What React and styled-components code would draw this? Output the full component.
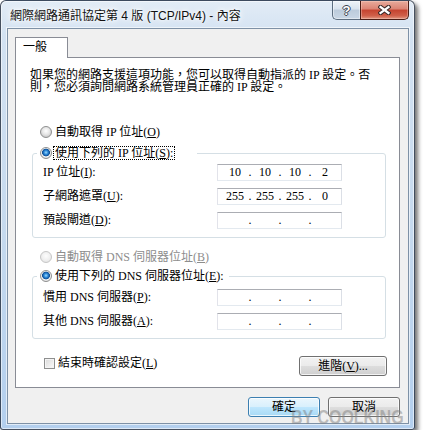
import React from "react";
import styled, { createGlobalStyle } from "styled-components";

const GlobalStyle = createGlobalStyle`
  html, body {
    margin: 0;
    padding: 0;
    background: #ffffff;
  }
  body {
    font-family: "Liberation Serif", "Noto Sans CJK TC", serif;
    font-size: 12px;
    color: #000;
  }
`;

const Window = styled.div`
  position: relative;
  box-sizing: border-box;
  width: 415px;
  height: 430px;
  padding: 0 5px 5px 6px;
  border: 1px solid rgba(20, 30, 45, 0.75);
  border-radius: 6px 6px 3px 3px;
  background: linear-gradient(180deg, #e2ecf6 0%, #d3e2f2 8%, #c5d9ee 55%, #b3cfee 100%);
  box-shadow: inset 0 0 0 1px rgba(255, 255, 255, 0.55), 3px 3px 4px rgba(0, 0, 0, 0.55);
  display: flex;
  flex-direction: column;
`;

const TitleBar = styled.div`
  height: 27px;
  display: flex;
  align-items: flex-start;
  justify-content: space-between;
`;

const Title = styled.div`
  margin: 8px 0 0 3px;
  font-family: "Liberation Sans", "Noto Sans CJK TC", sans-serif;
  font-size: 12px;
  line-height: 14px;
  color: #111;
  text-shadow: 0 0 6px #fff, 0 0 3px #fff, 0 0 10px rgba(255, 255, 255, 0.9);
`;

const CaptionButtons = styled.div`
  display: flex;
`;

const HelpButton = styled.div`
  box-sizing: border-box;
  width: 28px;
  height: 19px;
  border: 1px solid #5d6e80;
  border-top: none;
  border-right: none;
  border-radius: 0 0 0 5px;
  background: linear-gradient(180deg, #eef3f8 0%, #d9e3ee 45%, #bccbdb 50%, #c9d7e5 100%);
  box-shadow: inset 0 0 0 1px rgba(255, 255, 255, 0.45);
  display: flex;
  align-items: center;
  justify-content: center;
  font-family: "Liberation Sans", sans-serif;
  font-weight: bold;
  font-size: 13px;
  color: #fff;
  text-shadow: 1px 0 0 #3b4450, -1px 0 0 #3b4450, 0 1px 0 #3b4450, 0 -1px 0 #3b4450;
`;

const CloseButton = styled.div`
  box-sizing: border-box;
  width: 49px;
  height: 19px;
  border: 1px solid #4b1d15;
  border-top: none;
  border-radius: 0 0 5px 0;
  background: linear-gradient(180deg, #e8ab9c 0%, #db8373 45%, #c5432f 50%, #d0604a 82%, #e29a84 100%);
  box-shadow: inset 0 0 0 1px rgba(255, 220, 210, 0.35);
  display: flex;
  align-items: center;
  justify-content: center;
`;

const Client = styled.div`
  box-sizing: border-box;
  height: 396px;
  border: 1px solid #7e91a6;
  box-shadow: 0 0 0 1px rgba(255, 255, 255, 0.6);
  background: #f0f0f0;
  padding: 8px 8px 6px 7px;
  display: flex;
  flex-direction: column;
`;

const TabStrip = styled.div`
  display: flex;
  height: 20px;
`;

const Tab = styled.div`
  position: relative;
  z-index: 1;
  box-sizing: border-box;
  width: 53px;
  height: 21px;
  padding-left: 7px;
  border: 1px solid #898c95;
  border-bottom: none;
  background: #fff;
  line-height: 19px;
`;

const Panel = styled.div`
  box-sizing: border-box;
  height: 331px;
  border: 1px solid #898c95;
  background: #fff;
  display: flex;
  flex-direction: column;
`;

const Description = styled.p`
  margin: 11px 0 0 14px;
  line-height: 12px;
`;

const RadioRow = styled.div`
  display: flex;
  align-items: center;
  height: 16px;
  margin: ${(p) => p.$mt}px 0 0 24px;
  color: ${(p) => (p.$disabled ? "#8d8d8d" : "#000")};
`;

const RadioDot = styled.span`
  box-sizing: border-box;
  flex: none;
  width: 12px;
  height: 12px;
  border-radius: 50%;
  border: 1px solid ${(p) => (p.$disabled ? "#c6c6c6" : "#8e8f8f")};
  background: ${(p) =>
    p.$checked
      ? "radial-gradient(circle at 50% 45%, #9adbfb 0, #2a86d8 2px, #0c4c92 3.6px, #f6f6f6 4.2px, #d8d8d8 6px)"
      : p.$disabled
      ? "radial-gradient(circle at 50% 40%, #fdfdfd 0, #f0f0f0 4px, #e6e6e6 6px)"
      : "radial-gradient(circle at 50% 40%, #ffffff 0, #e6e6e6 3.5px, #cbcbcb 6px)"};
`;

const RadioText = styled.span`
  margin-left: 1px;
  padding: 0 1px;
  line-height: 12px;
  border: 1px dotted ${(p) => (p.$focused ? "#000" : "transparent")};
`;

const Group = styled.fieldset`
  margin: ${(p) => p.$mt}px 13px 0 16px;
  padding: ${(p) => p.$pt}px 0 8px 4px;
  min-inline-size: 0;
  border: 1px solid #d5dfe5;
  border-radius: 3px;
`;

const Legend = styled.legend`
  padding: 0;
  width: ${(p) => p.$w}px;
  height: 16px;
`;

const LegendInner = styled.div`
  display: flex;
  align-items: center;
  height: 16px;
  padding-left: 3px;
`;

const FieldGrid = styled.div`
  display: grid;
  grid-template-columns: 174px 125px;
  row-gap: 7px;
  align-items: center;
  margin-left: 6px;
`;

const FieldLabel = styled.span`
  line-height: 17px;
`;

const IpBox = styled.div`
  box-sizing: border-box;
  width: 125px;
  height: 17px;
  display: flex;
  align-items: center;
  padding-left: 5px;
  border: 1px solid;
  border-color: #abadb3 #dbdfe6 #e3e9ef #e2e3ea;
  background: #fff;
  line-height: 15px;
`;

const Octet = styled.span`
  width: 24px;
  text-align: center;
`;

const Dot = styled.span`
  width: 6px;
  text-align: center;
`;

const BottomRow = styled.div`
  display: flex;
  justify-content: space-between;
  align-items: flex-start;
  margin: 17px 12px 0 28px;
`;

const CheckLabel = styled.label`
  display: flex;
  align-items: center;
  height: 14px;
  line-height: 14px;
`;

const CheckBox = styled.span`
  box-sizing: border-box;
  width: 11px;
  height: 11px;
  margin-right: 3px;
  border: 1px solid #8e8f8f;
  background: linear-gradient(135deg, #d9d9d9 0%, #eeeeee 60%, #fbfbfb 100%);
  box-shadow: inset 0 0 0 1px #f4f4f4;
`;

const Button = styled.button`
  box-sizing: border-box;
  width: ${(p) => p.$w}px;
  height: 20px;
  padding: 0;
  border: 1px solid ${(p) => (p.$primary ? "#3c7fb1" : "#707070")};
  border-radius: 3px;
  background: ${(p) =>
    p.$primary
      ? "linear-gradient(180deg, #eaf6fd 0%, #d9f0fc 48%, #bee6fd 52%, #a7d9f5 100%)"
      : "linear-gradient(180deg, #f2f2f2 0%, #ebebeb 48%, #dddddd 52%, #cfcfcf 100%)"};
  box-shadow: inset 0 0 0 1px rgba(255, 255, 255, 0.75);
  font-family: "Liberation Serif", "Noto Sans CJK TC", serif;
  font-size: 12px;
  line-height: 18px;
  color: #000;
`;

const Footer = styled.div`
  display: flex;
  justify-content: flex-end;
  gap: 8px;
  margin-top: 9px;
`;

const Watermark = styled.div`
  position: absolute;
  left: 290px;
  top: 406px;
  white-space: nowrap;
  font-family: "Liberation Sans", sans-serif;
  font-weight: bold;
  font-size: 20px;
  line-height: 20px;
  color: rgba(130, 130, 130, 0.5);
  transform: scaleX(0.8);
  transform-origin: left center;
  pointer-events: none;
`;

const CloseIcon = () => (
  <svg width="13" height="10" viewBox="0 0 13 10">
    <path d="M2.5 2 L10.5 8 M10.5 2 L2.5 8" stroke="#3a2a28" strokeWidth="4.4" strokeLinecap="square" fill="none" />
    <path d="M2.5 2 L10.5 8 M10.5 2 L2.5 8" stroke="#ffffff" strokeWidth="2.2" strokeLinecap="square" fill="none" />
  </svg>
);

const Radio = ({ checked, disabled, focused, children, mt }) => (
  <RadioRow $mt={mt} $disabled={disabled}>
    <RadioDot $checked={checked} $disabled={disabled} />
    <RadioText $focused={focused}>{children}</RadioText>
  </RadioRow>
);

const LegendRadio = ({ w, focused, children }) => (
  <Legend $w={w}>
    <LegendInner>
      <RadioDot $checked />
      <RadioText $focused={focused}>{children}</RadioText>
    </LegendInner>
  </Legend>
);

const IpField = ({ value }) => {
  const parts = value ? value.split(".") : ["", "", "", ""];
  return (
    <IpBox>
      {parts.map((p, i) => (
        <React.Fragment key={i}>
          <Octet>{p}</Octet>
          {i < 3 && <Dot>.</Dot>}
        </React.Fragment>
      ))}
    </IpBox>
  );
};

export default function App() {
  return (
    <>
      <GlobalStyle />
      <Window>
        <TitleBar>
          <Title>網際網路通訊協定第 4 版 (TCP/IPv4) - 內容</Title>
          <CaptionButtons>
            <HelpButton>?</HelpButton>
            <CloseButton>
              <CloseIcon />
            </CloseButton>
          </CaptionButtons>
        </TitleBar>
        <Client>
          <TabStrip>
            <Tab>一般</Tab>
          </TabStrip>
          <Panel>
            <Description>
              如果您的網路支援這項功能，您可以取得自動指派的 IP 設定。否
              <br />
              則，您必須詢問網路系統管理員正確的 IP 設定。
            </Description>

            <Radio mt={31}>
              自動取得 IP 位址(<u>O</u>)
            </Radio>

            <Group $pt={3} $mt={5}>
              <LegendRadio w={160} focused>
                使用下列的 IP 位址(<u>S</u>):
              </LegendRadio>
              <FieldGrid>
                <FieldLabel>IP 位址(<u>I</u>):</FieldLabel>
                <IpField value="10.10.10.2" />
                <FieldLabel>子網路遮罩(<u>U</u>):</FieldLabel>
                <IpField value="255.255.255.0" />
                <FieldLabel>預設閘道(<u>D</u>):</FieldLabel>
                <IpField />
              </FieldGrid>
            </Group>

            <Radio mt={11} disabled>
              自動取得 DNS 伺服器位址(<u>B</u>)
            </Radio>

            <Group $pt={5} $mt={3}>
              <LegendRadio w={192}>
                使用下列的 DNS 伺服器位址(<u>E</u>):
              </LegendRadio>
              <FieldGrid>
                <FieldLabel>慣用 DNS 伺服器(<u>P</u>):</FieldLabel>
                <IpField />
                <FieldLabel>其他 DNS 伺服器(<u>A</u>):</FieldLabel>
                <IpField />
              </FieldGrid>
            </Group>

            <BottomRow>
              <CheckLabel>
                <CheckBox />
                結束時確認設定(<u>L</u>)
              </CheckLabel>
              <Button $w={88}>
                進階(<u>V</u>)...
              </Button>
            </BottomRow>
          </Panel>
          <Footer>
            <Button $w={72} $primary>
              確定
            </Button>
            <Button $w={72}>取消</Button>
          </Footer>
        </Client>
        <Watermark>BY COOLKING</Watermark>
      </Window>
    </>
  );
}
